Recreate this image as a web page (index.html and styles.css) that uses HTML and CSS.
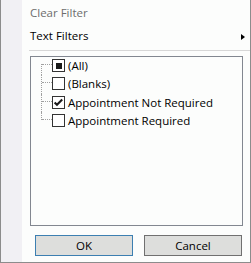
FILE: index.html
```html
<!DOCTYPE html>
<html>
<head>
<meta charset="utf-8">
<link rel="stylesheet" href="styles.css">
</head>
<body>
<div class="frame">
  <div class="strip"></div>
  <div class="main">
    <div class="menu-item disabled"><span>Clear Filter</span></div>
    <div class="menu-item"><span>Text Filters</span><span class="arrow"></span></div>
    <div class="separator"></div>
    <div class="listbox">
      <div class="tree">
        <div class="row first">
          <span class="branch"></span>
          <span class="cb"><span class="indet"></span></span>
          <span class="label">(All)</span>
        </div>
        <div class="row">
          <span class="branch"></span>
          <span class="cb"></span>
          <span class="label">(Blanks)</span>
        </div>
        <div class="row">
          <span class="branch"></span>
          <span class="cb"><svg class="check" width="11" height="11" viewBox="0 0 11 11"><path d="M1.6 5.4 L4 7.8 L9.2 2.6" fill="none" stroke="#1a1a1a" stroke-width="2.1"/></svg></span>
          <span class="label">Appointment Not Required</span>
        </div>
        <div class="row last">
          <span class="branch"></span>
          <span class="cb"></span>
          <span class="label">Appointment Required</span>
        </div>
      </div>
    </div>
    <div class="buttons">
      <button class="btn default">OK</button>
      <button class="btn">Cancel</button>
    </div>
  </div>
</div>
</body>
</html>
```
FILE: styles.css
```css
html, body {
  margin: 0;
  padding: 0;
  background: #ffffff;
}
body {
  font-family: "Open Sans", "Noto Sans", sans-serif;
  font-size: 11.5px;
  color: #000;
}
.frame {
  width: 251px;
  height: 263px;
  box-sizing: border-box;
  border: 1px solid #8c8c8c;
  border-top: 0;
  display: flex;
}
.strip {
  width: 21px;
  background: #f1f0f4;
  flex: none;
}
.main {
  flex: 1;
  background: #fcfdfc;
  display: flex;
  flex-direction: column;
  padding-top: 2px;
}
.menu-item {
  height: 22px;
  line-height: 22px;
  padding-left: 8px;
  padding-right: 5px;
  display: flex;
  justify-content: space-between;
  align-items: center;
  margin-bottom: 1px;
}
.menu-item.disabled {
  color: #6d6d6d;
}
.arrow {
  width: 0;
  height: 0;
  border-top: 3.5px solid transparent;
  border-bottom: 3.5px solid transparent;
  border-left: 4px solid #000;
  margin-top: 2px;
}
.separator {
  height: 1px;
  background: #d7d7d7;
  margin: 2px 0 0 7px;
}
.listbox {
  margin: 5px 0 0 8px;
  width: 213px;
  height: 170px;
  box-sizing: border-box;
  border: 1px solid #828790;
  background: #fcfdfc;
}
.tree {
  padding-left: 10px;
}
.row {
  height: 18.33px;
  display: flex;
  align-items: flex-start;
  white-space: nowrap;
}
.branch {
  width: 11px;
  height: 100%;
  position: relative;
  flex: none;
}
.branch::before {
  content: "";
  position: absolute;
  left: 0;
  top: 0;
  bottom: 0;
  border-left: 1px dotted #a0a0a0;
}
.row.first .branch::before {
  top: 7px;
}
.row.last .branch::before {
  bottom: auto;
  height: 8px;
}
.branch::after {
  content: "";
  position: absolute;
  left: 1px;
  right: 0;
  top: 7px;
  border-top: 1px dotted #a0a0a0;
}
.cb {
  width: 13px;
  height: 13px;
  box-sizing: border-box;
  border: 1px solid #333333;
  background: #ffffff;
  margin-top: 2px;
  flex: none;
  display: flex;
  align-items: flex-start;
  justify-content: flex-start;
}
.indet {
  width: 6px;
  height: 6px;
  margin: 3px 0 0 3px;
  background: #1a1a1a;
}
.check {
  display: block;
}
.label {
  margin-left: 3px;
  line-height: 18px;
}
.buttons {
  display: flex;
  gap: 11px;
  margin: 9px 0 0 13px;
}
.btn {
  width: 98px;
  height: 21px;
  box-sizing: border-box;
  border: 1px solid #707070;
  background: #dddedc;
  font-family: inherit;
  font-size: 11.5px;
  color: #000;
  padding: 0;
  margin: 0;
  border-radius: 0;
  line-height: 19px;
}
.btn.default {
  border-color: #3c7fb1;
}
```
